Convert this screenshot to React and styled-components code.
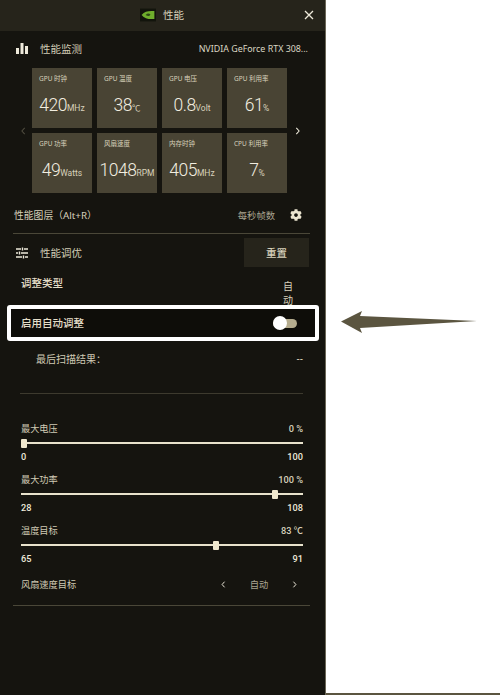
import React from 'react'
import styled, { createGlobalStyle } from 'styled-components'
import { FaCog } from 'react-icons/fa'

const Global = createGlobalStyle`
html, body { margin:0; padding:0; background:#fff; }
* { box-sizing:border-box; }
body { font-family:"Noto Sans","Noto Sans CJK SC",sans-serif; }
`

const row1 = [
  { label: 'GPU 时钟', value: '420', unit: 'MHz' },
  { label: 'GPU 温度', value: '38', unit: '℃' },
  { label: 'GPU 电压', value: '0.8', unit: 'Volt' },
  { label: 'GPU 利用率', value: '61', unit: '%' },
]
const row2 = [
  { label: 'GPU 功率', value: '49', unit: 'Watts' },
  { label: '风扇速度', value: '1048', unit: 'RPM' },
  { label: '内存时钟', value: '405', unit: 'MHz' },
  { label: 'CPU 利用率', value: '7', unit: '%' },
]
const sliders = [
  { label: '最大电压', value: '0 %', min: '0', max: '100', pos: 0 },
  { label: '最大功率', value: '100 %', min: '28', max: '108', pos: 89 },
  { label: '温度目标', value: '83 ℃', min: '65', max: '91', pos: 68 },
]

export default function App() {
  return (
    <Page>
      <Global />
      <Panel>
        <Header>
          <Logo viewBox="0 0 20 16">
            <rect width="20" height="16" fill="#12140c" />
            <path d="M2 8 C6 3 11 2.5 18 3 L18 13 C11 13.5 6 13 2 8 Z" fill="#6fae2c" />
            <path d="M7 8 C9 6 11 5.8 13 7 C12.5 9.5 10 10 7 8 Z" fill="#2d4a14" />
          </Logo>
          <HeaderTitle>性能</HeaderTitle>
          <Close viewBox="0 0 10 10">
            <path d="M1 1 L9 9 M9 1 L1 9" stroke="#eeeadb" strokeWidth="1.3" fill="none" />
          </Close>
        </Header>

        <TitleRow>
          <TitleIcon viewBox="0 0 12 12">
            <path d="M0 6 H3 V12 H0 Z M4.5 1 H7.5 V12 H4.5 Z M9 4 H12 V12 H9 Z" fill="#eeeadb" />
          </TitleIcon>
          <SectionTitle>性能监测</SectionTitle>
          <GpuName>NVIDIA GeForce RTX 308...</GpuName>
        </TitleRow>

        <Carousel>
          <Chevron viewBox="0 0 6 10" $dim>
            <path d="M4.5 1 L1 5 L4.5 9" />
          </Chevron>
          <Grid>
            {[...row1, ...row2].map((c) => (
              <Card key={c.label}>
                <CardLabel>{c.label}</CardLabel>
                <CardValue>
                  {c.value}
                  <Unit>{c.unit}</Unit>
                </CardValue>
              </Card>
            ))}
          </Grid>
          <Chevron viewBox="0 0 6 10">
            <path d="M1.5 1 L5 5 L1.5 9" />
          </Chevron>
        </Carousel>

        <OverlayRow>
          <RowText>性能图层（Alt+R）</RowText>
          <FpsGroup>
            <FpsText>每秒帧数</FpsText>
            <FaCog size={12} color="#eae4cf" />
          </FpsGroup>
        </OverlayRow>
        <Divider />

        <TuneRow>
          <TitleIcon viewBox="0 0 12 12">
            <path d="M0 2 H5 M8 2 H12 M0 6 H2 M5 6 H12 M0 10 H6 M9 10 H12 M6.5 0.5 V3.5 M3.5 4.5 V7.5 M7.5 8.5 V11.5" stroke="#eeeadb" strokeWidth="1.4" fill="none" />
          </TitleIcon>
          <SectionTitle>性能调优</SectionTitle>
          <ResetButton>重置</ResetButton>
        </TuneRow>

        <TypeRow>
          <BoldLabel>调整类型</BoldLabel>
          <TypeValue>自动</TypeValue>
        </TypeRow>

        <Highlight>
          <BoldLabel>启用自动调整</BoldLabel>
          <Toggle>
            <Knob />
          </Toggle>
        </Highlight>

        <ScanRow>
          <ScanLabel>最后扫描结果：</ScanLabel>
          <ScanValue>--</ScanValue>
        </ScanRow>
        <InnerDivider />

        <Sliders>
          {sliders.map((s) => (
            <SliderBlock key={s.label}>
              <SliderHead>
                <SliderLabel>{s.label}</SliderLabel>
                <SliderValue>{s.value}</SliderValue>
              </SliderHead>
              <Track>
                <Thumb style={{ left: `${s.pos}%` }} />
              </Track>
              <SliderEnds>
                <span>{s.min}</span>
                <span>{s.max}</span>
              </SliderEnds>
            </SliderBlock>
          ))}
        </Sliders>

        <FanRow>
          <SliderLabel>风扇速度目标</SliderLabel>
          <FanPicker>
            <SmallChevron viewBox="0 0 6 10">
              <path d="M4.5 1 L1 5 L4.5 9" />
            </SmallChevron>
            <FanValue>自动</FanValue>
            <SmallChevron viewBox="0 0 6 10">
              <path d="M1.5 1 L5 5 L1.5 9" />
            </SmallChevron>
          </FanPicker>
        </FanRow>
        <FanDivider />
      </Panel>

      <Side>
        <Arrow viewBox="0 0 136 22">
          <path d="M0 10.5 L21 0 L19 5 L136 10 L19 17 L21 22 Z" fill="#5b5540" />
        </Arrow>
      </Side>
    </Page>
  )
}

const Page = styled.div`
display:flex;
width:500px;
height:695px;
overflow:hidden;
`
const Panel = styled.div`
width:326px;
height:695px;
flex:none;
background:#15140f;
border-right:1px solid #6b6758;
color:#d8d2bc;
`
const Header = styled.div`
height:31px;
background:#26241b;
display:flex;
align-items:center;
justify-content:center;
position:relative;
padding:0 1px 2px 0;
`
const Logo = styled.svg`
width:16px;
height:14px;
margin-right:7px;
`
const HeaderTitle = styled.div`
font-size:10.5px;
color:#d8d2bc;
`
const Close = styled.svg`
position:absolute;
right:11px;
top:10px;
width:10px;
height:10px;
`
const TitleRow = styled.div`
display:flex;
align-items:center;
height:22px;
margin-top:6px;
padding:0 17px 0 16px;
`
const TitleIcon = styled.svg`
width:12px;
height:12px;
flex:none;
margin-right:12px;
`
const SectionTitle = styled.div`
font-size:10.5px;
color:#d2ccb6;
white-space:nowrap;
`
const GpuName = styled.div`
margin-left:auto;
font-size:8.9px;
color:#dcd7c4;
white-space:nowrap;
`
const Carousel = styled.div`
display:flex;
align-items:center;
margin-top:9px;
padding-left:21px;
`
const Chevron = styled.svg`
width:5px;
height:8px;
flex:none;
fill:none;
stroke:${props => props.$dim ? '#4f4c3f' : '#eeeadb'};
stroke-width:1.3;
`
const Grid = styled.div`
display:grid;
grid-template-columns:repeat(4,60px);
grid-auto-rows:60px;
gap:5px;
margin:0 8px 0 6px;
`
const Card = styled.div`
background:#494434;
padding-top:6px;
display:flex;
flex-direction:column;
`
const CardLabel = styled.div`
font-size:6.5px;
line-height:9px;
padding-left:7px;
color:#d8d2bc;
white-space:nowrap;
`
const CardValue = styled.div`
margin-top:10px;
text-align:center;
font-family:Roboto,"Noto Sans CJK SC",sans-serif;
font-weight:300;
font-size:17.5px;
letter-spacing:-0.5px;
line-height:24px;
color:#f2eee0;
white-space:nowrap;
`
const Unit = styled.span`
font-size:8.5px;
font-weight:400;
letter-spacing:0;
color:#d8d2bc;
`
const OverlayRow = styled.div`
display:flex;
align-items:center;
justify-content:space-between;
height:24px;
margin-top:10px;
padding:0 23px 0 14px;
`
const RowText = styled.div`
font-size:9.8px;
color:#d8d2bc;
`
const FpsGroup = styled.div`
display:flex;
align-items:center;
`
const FpsText = styled.div`
font-size:9.3px;
color:#a8a390;
margin-right:15px;
`
const Divider = styled.div`
height:1px;
margin:6px 15px 0 13px;
background:#4a4738;
`
const TuneRow = styled.div`
display:flex;
align-items:center;
height:29px;
margin-top:4px;
padding:0 16px;
`
const ResetButton = styled.div`
margin-left:auto;
width:65px;
height:29px;
background:#26241b;
display:flex;
align-items:center;
justify-content:center;
font-size:10.5px;
font-weight:500;
color:#d8d2bc;
`
const TypeRow = styled.div`
display:flex;
justify-content:space-between;
align-items:flex-start;
height:38px;
padding:9px 31px 0 21px;
`
const BoldLabel = styled.div`
font-size:10.5px;
line-height:14px;
font-weight:500;
color:#e4dec9;
`
const TypeValue = styled.div`
width:11px;
margin-top:3px;
font-size:10px;
line-height:14px;
color:#d8d2bc;
`
const Highlight = styled.div`
display:flex;
align-items:center;
justify-content:space-between;
height:36px;
margin:0 6px 0 7px;
padding:0 18px 0 10px;
background:#0e0d09;
border:4px solid #fff;
border-radius:3px;
`
const Toggle = styled.div`
width:24px;
height:9px;
border-radius:5px;
background:#b5ac8e;
position:relative;
`
const Knob = styled.div`
position:absolute;
left:0;
top:-2.5px;
width:14px;
height:14px;
border-radius:50%;
background:#fff;
`
const ScanRow = styled.div`
display:flex;
justify-content:space-between;
align-items:center;
height:20px;
margin-top:7px;
padding:0 22px 0 36px;
`
const ScanLabel = styled.div`
font-size:10px;
color:#d0cab4;
`
const ScanValue = styled.div`
font-size:10px;
color:#d8d2bc;
`
const InnerDivider = styled.div`
height:1px;
margin:25px 22px 0 20px;
background:#3d3a2e;
`
const Sliders = styled.div`
margin-top:24px;
padding:0 22px 0 21px;
display:flex;
flex-direction:column;
gap:5px;
`
const SliderBlock = styled.div`
display:flex;
flex-direction:column;
`
const SliderHead = styled.div`
display:flex;
justify-content:space-between;
align-items:center;
height:20px;
`
const SliderLabel = styled.div`
font-size:9.2px;
color:#d0cab4;
white-space:nowrap;
`
const SliderValue = styled.div`
font-family:Roboto,"Noto Sans CJK SC",sans-serif;
font-size:9.2px;
font-weight:500;
color:#d8d2bc;
`
const Track = styled.div`
height:2px;
margin-top:4px;
background:#e8e2cc;
position:relative;
`
const Thumb = styled.div`
position:absolute;
top:-3.5px;
width:6px;
height:9px;
background:#efe7cd;
border-radius:1px;
`
const SliderEnds = styled.div`
display:flex;
justify-content:space-between;
align-items:center;
height:16px;
margin-top:4px;
font-family:Roboto,sans-serif;
font-size:9.2px;
font-weight:500;
color:#eeeadb;
`
const FanRow = styled.div`
display:flex;
align-items:center;
justify-content:space-between;
height:20px;
margin-top:8px;
padding:0 28px 0 21px;
`
const FanPicker = styled.div`
display:flex;
align-items:center;
`
const SmallChevron = styled.svg`
width:5px;
height:7px;
fill:none;
stroke:#eeeadb;
stroke-width:1.4;
`
const FanValue = styled.div`
width:66px;
text-align:center;
font-size:9.3px;
color:#a8a390;
`
const FanDivider = styled(Divider)`
margin-top:11px;
`
const Side = styled.div`
flex:1;
height:695px;
padding:311px 0 0 15px;
background:#fff;
border-bottom:2px solid #5b5540;
`
const Arrow = styled.svg`
display:block;
width:136px;
height:22px;
`
